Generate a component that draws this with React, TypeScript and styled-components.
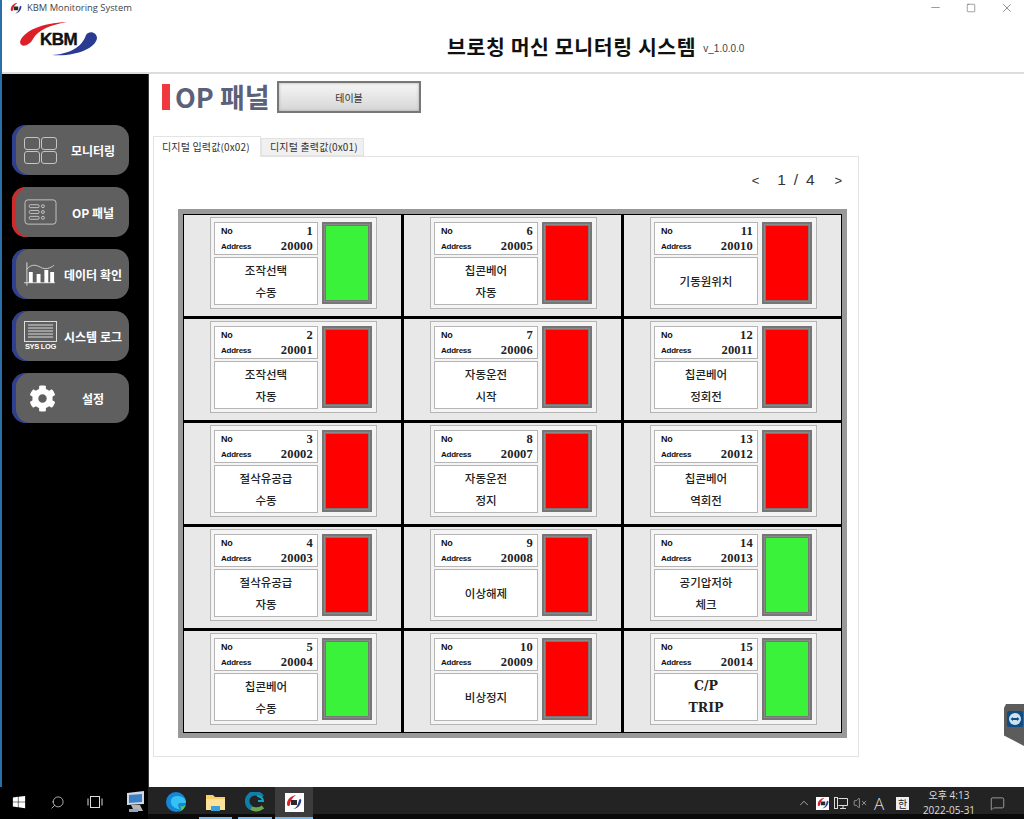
import React from "react";
import styled, { createGlobalStyle } from "styled-components";
import { FaCog, FaWindows } from "react-icons/fa";
import { ChevronUp, MessageSquare, Minus, Search, Square, VolumeX, X } from "lucide-react";

const KR = `"Noto Sans CJK KR", "Noto Sans", sans-serif`;

const signals = [
  { no: 1, address: 20000, lines: ["조작선택", "수동"], on: true },
  { no: 6, address: 20005, lines: ["칩콘베어", "자동"], on: false },
  { no: 11, address: 20010, lines: ["기동원위치"], on: false },
  { no: 2, address: 20001, lines: ["조작선택", "자동"], on: false },
  { no: 7, address: 20006, lines: ["자동운전", "시작"], on: false },
  { no: 12, address: 20011, lines: ["칩콘베어", "정회전"], on: false },
  { no: 3, address: 20002, lines: ["절삭유공급", "수동"], on: false },
  { no: 8, address: 20007, lines: ["자동운전", "정지"], on: false },
  { no: 13, address: 20012, lines: ["칩콘베어", "역회전"], on: false },
  { no: 4, address: 20003, lines: ["절삭유공급", "자동"], on: false },
  { no: 9, address: 20008, lines: ["이상해제"], on: false },
  { no: 14, address: 20013, lines: ["공기압저하", "체크"], on: true },
  { no: 5, address: 20004, lines: ["칩콘베어", "수동"], on: true },
  { no: 10, address: 20009, lines: ["비상정지"], on: false },
  { no: 15, address: 20014, lines: ["C/P", "TRIP"], on: true, latin: true },
];

function MonitorIcon() {
  return (
    <svg width="33" height="27" viewBox="0 0 33 27" fill="none" stroke="#c4c4c4" strokeWidth="1">
      <rect x="0.5" y="0.5" width="15" height="12" rx="2.5" />
      <rect x="17.5" y="0.5" width="15" height="12" rx="2.5" />
      <rect x="0.5" y="14.5" width="15" height="12" rx="2.5" />
      <rect x="17.5" y="14.5" width="15" height="12" rx="2.5" />
    </svg>
  );
}

function PanelIcon() {
  return (
    <svg width="34" height="26" viewBox="0 0 34 26" fill="none" stroke="#c4c4c4" strokeWidth="1">
      <rect x="1" y="0.5" width="32" height="25" rx="3" />
      <rect x="5.5" y="5.5" width="10" height="3" rx="1" />
      <rect x="5.5" y="11.5" width="10" height="3" rx="1" />
      <rect x="5.5" y="17.5" width="10" height="3" rx="1" />
      <circle cx="19.5" cy="7" r="1.5" />
      <circle cx="19.5" cy="13" r="1.5" />
      <circle cx="19.5" cy="19" r="1.5" />
    </svg>
  );
}

function ChartIcon() {
  return (
    <svg width="34" height="26" viewBox="0 0 34 26" fill="none">
      <path d="M3 1V25M0 22H32" stroke="#ddd" strokeWidth="1" />
      <path d="M3 8C8 2 13 4 17 6C22 9 27 7 31 4" stroke="#ccc" strokeWidth="1" />
      <path d="M5 11H9V22H5ZM13 13H17V22H13ZM21 9H25V22H21ZM27 11H31V22H27Z" fill="#fff" />
    </svg>
  );
}

function LogIcon() {
  return (
    <LogWrap>
      <svg width="33" height="21" viewBox="0 0 33 21" fill="none" stroke="#ddd" strokeWidth="1">
        <rect x="0.5" y="0.5" width="32" height="20" />
        <path d="M4 4H29M4 7H29M4 10H29M4 13H29M4 16H29" />
      </svg>
      <LogCaption>SYS LOG</LogCaption>
    </LogWrap>
  );
}

const navItems = [
  { label: "모니터링", icon: <MonitorIcon /> },
  { label: "OP 패널", icon: <PanelIcon />, active: true },
  { label: "데이터 확인", icon: <ChartIcon /> },
  { label: "시스템 로그", icon: <LogIcon /> },
  { label: "설정", icon: <FaCog size={27} color="#fff" style={{ marginLeft: 5 }} /> },
];

function KbmLogo() {
  return (
    <svg width="80" height="36" viewBox="0 0 80 36">
      <path d="M0 21C3 10 22 2 47 1C30 4 18 9 13 18C10 24 1 28 0 21Z" fill="#dd2027" />
      <path d="M32 34C48 33 62 27 66 14C69 9 77 11 77 17C76 27 56 36 32 34Z" fill="#2a3c92" />
      <LogoText x="20" y="24">KBM</LogoText>
    </svg>
  );
}

function AppGlyph({ size = 16 }: { size?: number }) {
  return (
    <svg width={size} height={size} viewBox="0 0 16 16">
      <path d="M1 10C1 5 5 2 10 1C6 4 4 7 4 11C3 13 1 12 1 10Z" fill="#d8242a" />
      <path d="M7 15C11 14 12 10 13 6C14 4 16 5 15 8C14 12 11 15 7 15Z" fill="#2a3c92" />
      <path d="M5 6H11V11H5Z" fill="#2b2b2b" />
    </svg>
  );
}

function EdgeIcon() {
  return (
    <svg width="20" height="20" viewBox="0 0 20 20">
      <circle cx="10" cy="10" r="10" fill="#1487d8" />
      <path d="M20 11C20 6 16 4 11 4C7 4 4 7 5 11C6 15 10 17 14 17C12 15 11 12 14 11Z" fill="#35c1f1" />
      <path d="M20 12C19 17 15 20 10 20C14 20 17 17 14 14C16 15 19 14 20 12Z" fill="#4fce5c" />
    </svg>
  );
}

function EdgeDevIcon() {
  return (
    <svg width="20" height="20" viewBox="0 0 20 20" fill="none">
      <path d="M17 5A8 8 0 1 0 6 16" stroke="#0f7fa8" strokeWidth="4.5" />
      <path d="M6 16C10 18 14 18 18 15" stroke="#6aa84f" strokeWidth="4" />
      <path d="M12 4C15 4 18 6 18 9H13" stroke="#12a5c4" strokeWidth="2" />
    </svg>
  );
}

function FolderIcon() {
  return (
    <svg width="19" height="18" viewBox="0 0 19 18">
      <path d="M0 2H7L9 4H19V17H0Z" fill="#f6cf68" />
      <path d="M0 6H19V17H0Z" fill="#fbe29a" />
      <path d="M5 13H14V18H5Z" fill="#3aa0dc" />
    </svg>
  );
}

function RemoteIcon() {
  return (
    <svg width="20" height="22" viewBox="0 0 20 22">
      <path d="M1 2L18 0V13L1 14Z" fill="#cfd8e6" />
      <path d="M3 4L16 3V11L3 12Z" fill="#3d7fc4" />
      <path d="M5 14H14L17 20H8Z" fill="#b5b5b5" />
      <path d="M3 18H12V21H3Z" fill="#8fa8c4" />
    </svg>
  );
}

function NetworkIcon() {
  return (
    <svg width="14" height="13" viewBox="0 0 14 13" fill="none" stroke="#ddd" strokeWidth="1">
      <path d="M4.5 1.5H13.5V8.5H4.5M9 8.5V11.5M6 11.5H12" />
      <rect x="0.5" y="0.5" width="3" height="11" />
    </svg>
  );
}

export default function App() {
  return (
    <>
      <GlobalStyle />
      <Page>
        <Win>
          <TitleBar>
            <TitleLeft>
              <AppGlyph size={12} />
              <span>KBM Monitoring System</span>
            </TitleLeft>
            <WinControls>
              <Minus size={13} strokeWidth={1} />
              <Square size={10} strokeWidth={1.2} />
              <X size={14} strokeWidth={1} />
            </WinControls>
          </TitleBar>
          <Header>
            <LogoSlot>
              <KbmLogo />
            </LogoSlot>
            <HeaderTitle>브로칭 머신 모니터링 시스템</HeaderTitle>
            <Version>v_1.0.0.0</Version>
          </Header>
          <Body>
            <Sidebar>
              {navItems.map((item) => (
                <NavButton key={item.label} $active={item.active}>
                  <NavIcon>{item.icon}</NavIcon>
                  <NavLabel>{item.label}</NavLabel>
                </NavButton>
              ))}
            </Sidebar>
            <Main>
              <TitleRow>
                <RedMark />
                <PageTitle>OP 패널</PageTitle>
                <TableButton>테이블</TableButton>
              </TitleRow>
              <Tabs>
                <Tab $active>디지털 입력값(0x02)</Tab>
                <Tab>디지털 출력값(0x01)</Tab>
              </Tabs>
              <Panel>
                <Pager>
                  <PagerArrow>&lt;</PagerArrow>
                  <PagerText>1 / 4</PagerText>
                  <PagerArrow>&gt;</PagerArrow>
                </Pager>
                <GridFrame>
                  <SignalGrid>
                    {signals.map((s) => (
                      <Cell key={s.no}>
                        <Card>
                          <CardText>
                            <InfoBox>
                              <InfoRow>
                                <InfoKey>No</InfoKey>
                                <InfoValue>{s.no}</InfoValue>
                              </InfoRow>
                              <InfoRow>
                                <InfoKey $small>Address</InfoKey>
                                <InfoValue>{s.address}</InfoValue>
                              </InfoRow>
                            </InfoBox>
                            <NameBox $latin={s.latin}>
                              {s.lines.map((line) => (
                                <div key={line}>{line}</div>
                              ))}
                            </NameBox>
                          </CardText>
                          <Lamp $on={s.on} />
                        </Card>
                      </Cell>
                    ))}
                  </SignalGrid>
                </GridFrame>
              </Panel>
            </Main>
          </Body>
          <RemoteTab>
            <RemoteBadge>
              <svg width="14" height="14" viewBox="0 0 14 14">
                <circle cx="7" cy="7" r="6" fill="#cfe0ee" />
                <path d="M2.5 7L5 5V6H9V5L11.5 7L9 9V8H5V9Z" fill="#0e4c86" />
              </svg>
            </RemoteBadge>
          </RemoteTab>
        </Win>
        <Taskbar>
          <TaskLeft>
            <TaskSlot $w={38}><FaWindows size={14} color="#fff" /></TaskSlot>
            <TaskSlot $w={38}><Search size={15} color="#ddd" strokeWidth={1.2} style={{ transform: "scaleX(-1)" }} /></TaskSlot>
            <TaskSlot $w={38}>
              <svg width="16" height="12" viewBox="0 0 16 12" fill="none" stroke="#ddd" strokeWidth="1">
                <rect x="3.5" y="0.5" width="9" height="11" />
                <path d="M1 2.5V9.5M15 2.5V9.5" />
              </svg>
            </TaskSlot>
            <TaskSlot $w={44}><RemoteIcon /></TaskSlot>
          </TaskLeft>
          <TaskApps>
            <TaskSlot $w={39}><EdgeIcon /></TaskSlot>
            <TaskSlot $w={33} $ml={4} $running><FolderIcon /></TaskSlot>
            <TaskSlot $w={34} $ml={6} $running><EdgeDevIcon /></TaskSlot>
            <TaskSlot $w={38} $ml={3} $running $current>
              <AppTile><AppGlyph /></AppTile>
            </TaskSlot>
          </TaskApps>
          <Tray>
            <ChevronUp size={14} color="#ddd" strokeWidth={1.2} />
            <AppTile $small><AppGlyph size={12} /></AppTile>
            <NetworkIcon />
            <VolumeX size={14} color="#ddd" strokeWidth={1} />
            <ImeA>A</ImeA>
            <ImeHan>한</ImeHan>
            <Clock>
              <div>오후 4:13</div>
              <div>2022-05-31</div>
            </Clock>
            <MessageSquare size={15} color="#ddd" strokeWidth={1} />
          </Tray>
        </Taskbar>
      </Page>
    </>
  );
}

const GlobalStyle = createGlobalStyle`
  html, body {
    margin: 0;
    padding: 0;
    background: #fff;
  }
  * {
    box-sizing: border-box;
  }
`;

const Page = styled.div`
  width: 1024px;
  height: 819px;
  overflow: hidden;
  display: flex;
  flex-direction: column;
  font-family: ${KR};
`;

const Win = styled.div`
  position: relative;
  height: 787px;
  display: flex;
  flex-direction: column;
  border-left: 2px solid #2b6fa8;
  background: #fff;
`;

const TitleBar = styled.div`
  height: 15px;
  display: flex;
  align-items: center;
  justify-content: space-between;
`;

const TitleLeft = styled.div`
  display: flex;
  align-items: center;
  gap: 5px;
  padding-left: 8px;
  font-family: "Open Sans", sans-serif;
  font-size: 9.4px;
  color: #444;
`;

const WinControls = styled.div`
  display: flex;
  align-items: center;
  gap: 24px;
  padding-right: 10px;
  color: #444;
`;

const Header = styled.div`
  height: 59px;
  position: relative;
  display: flex;
  align-items: center;
  border-bottom: 2px solid #dcdcdc;
`;

const LogoSlot = styled.div`
  width: 445px;
  padding: 0 0 5px 18px;
`;

const HeaderTitle = styled.div`
  font-size: 20.5px;
  letter-spacing: 0.6px;
  font-weight: 700;
  color: #111;
  padding-top: 5px;
`;

const Version = styled.div`
  font-family: "Liberation Sans", sans-serif;
  font-size: 10px;
  color: #444;
  margin: 10px 0 0 7px;
`;

const LogoText = styled.text`
  font-family: "Liberation Sans", sans-serif;
  font-size: 17px;
  font-weight: 700;
  fill: #111;
  stroke: #111;
  stroke-width: 0.4px;
  letter-spacing: -0.5px;
`;

const Body = styled.div`
  flex: 1;
  display: flex;
  min-height: 0;
`;

const Sidebar = styled.nav`
  width: 147px;
  background: #000;
  border-right: 1px solid #3a3a3a;
  padding: 51px 0 0 10px;
  display: flex;
  flex-direction: column;
  gap: 12px;
`;

const NavButton = styled.div<{ $active?: boolean }>`
  width: 117px;
  height: 50px;
  border-radius: 14px;
  background: #5f5f5f;
  box-shadow: inset 4px 0 0 ${(p) => (p.$active ? "#d12a2a" : "#2f3f92")};
  display: flex;
  align-items: center;
`;

const NavIcon = styled.div`
  width: 45px;
  padding-left: 12px;
  display: flex;
  align-items: center;
  flex-shrink: 0;
`;

const NavLabel = styled.div`
  flex: 1;
  text-align: center;
  color: #fff;
  font-size: 12px;
  font-weight: 700;
  white-space: nowrap;
`;

const LogWrap = styled.div`
  display: flex;
  flex-direction: column;
  align-items: center;
`;

const LogCaption = styled.div`
  font-family: "Liberation Sans", sans-serif;
  font-size: 7.5px;
  font-weight: 700;
  letter-spacing: -0.3px;
  color: #fff;
  line-height: 9px;
  white-space: nowrap;
`;

const Main = styled.main`
  flex: 1;
  padding: 7px 0 0 4px;
`;

const TitleRow = styled.div`
  height: 32px;
  display: flex;
  align-items: center;
`;

const RedMark = styled.div`
  width: 8px;
  height: 26px;
  margin-left: 9px;
  background: #f0393f;
`;

const PageTitle = styled.div`
  width: 107px;
  padding: 0 0 2px 5px;
  font-size: 27px;
  font-weight: 700;
  color: #5b6178;
  white-space: nowrap;
`;

const TableButton = styled.div`
  width: 144px;
  height: 32px;
  border: 2px solid #777;
  background: linear-gradient(#f6f6f6, #d6d6d6);
  box-shadow: inset 0 0 3px #aaa;
  display: flex;
  align-items: center;
  justify-content: center;
  font-size: 10px;
  color: #333;
`;

const Tabs = styled.div`
  margin-top: 22px;
  height: 21px;
  display: flex;
  align-items: flex-end;
`;

const Tab = styled.div<{ $active?: boolean }>`
  height: ${(p) => (p.$active ? 21 : 18)}px;
  width: ${(p) => (p.$active ? 108 : 103)}px;
  margin-bottom: ${(p) => (p.$active ? -1 : 0)}px;
  position: relative;
  padding: 0 0 2px 8px;
  display: flex;
  align-items: center;
  font-size: 10px;
  letter-spacing: 0.15px;
  color: #333;
  white-space: nowrap;
  background: ${(p) => (p.$active ? "#fff" : "#f0f0f0")};
  border: 1px solid #e3e3e3;
  border-bottom: ${(p) => (p.$active ? "none" : "1px solid #e3e3e3")};
`;

const Panel = styled.section`
  width: 706px;
  height: 601px;
  border: 1px solid #e3e3e3;
  padding: 13px 0 0 24px;
`;

const Pager = styled.div`
  height: 20px;
  width: 669px;
  padding-right: 5px;
  display: flex;
  justify-content: flex-end;
  align-items: center;
  gap: 18px;
  font-family: "Liberation Sans", sans-serif;
  color: #333;
`;

const PagerArrow = styled.span`
  font-size: 13px;
`;

const PagerText = styled.span`
  font-size: 15.5px;
  letter-spacing: 1.8px;
`;

const GridFrame = styled.div`
  margin-top: 19px;
  width: 669px;
  height: 529px;
  background: #000;
  border: 5px solid #999;
  padding: 1px;
`;

const SignalGrid = styled.div`
  height: 100%;
  display: grid;
  grid-template-columns: repeat(3, 1fr);
  grid-template-rows: repeat(5, 1fr);
  gap: 3px;
`;

const Cell = styled.div`
  background: #e8e8e8;
  display: flex;
  align-items: flex-start;
  padding: 2px 0 0 26px;
`;

const Card = styled.div`
  width: 167px;
  height: 92px;
  background: #f4f4f4;
  border: 1px solid #b5b5b5;
  padding: 4px 4px 3px 3px;
  display: flex;
  gap: 4px;
`;

const CardText = styled.div`
  width: 104px;
  display: flex;
  flex-direction: column;
  gap: 2px;
`;

const InfoBox = styled.div`
  height: 33px;
  background: #fff;
  border: 1px solid #b5b5b5;
  padding: 0 4px 0 6px;
  display: flex;
  flex-direction: column;
  justify-content: center;
`;

const InfoRow = styled.div`
  height: 15px;
  display: flex;
  align-items: center;
  justify-content: space-between;
`;

const InfoKey = styled.span<{ $small?: boolean }>`
  font-family: "Liberation Sans", sans-serif;
  font-size: ${(p) => (p.$small ? 8 : 9)}px;
  font-weight: 700;
  letter-spacing: -0.25px;
  color: #111;
`;

const InfoValue = styled.span`
  font-family: "Liberation Serif", serif;
  font-size: 12.5px;
  font-weight: 700;
  letter-spacing: 0.2px;
  color: #222;
`;

const NameBox = styled.div<{ $latin?: boolean }>`
  flex: 1;
  background: #fff;
  border: 1px solid #b5b5b5;
  display: flex;
  flex-direction: column;
  align-items: center;
  justify-content: center;
  gap: 5.5px;
  font-family: ${(p) => (p.$latin ? `"DejaVu Serif", serif` : KR)};
  font-size: ${(p) => (p.$latin ? 12.5 : 11.5)}px;
  font-weight: ${(p) => (p.$latin ? 700 : 500)};
  line-height: 16px;
  color: #222;
`;

const Lamp = styled.div<{ $on?: boolean }>`
  width: 50px;
  height: 82px;
  border: 4px solid #767676;
  outline: 1px solid #8a8a8a;
  outline-offset: -3px;
  background: ${(p) => (p.$on ? "#3af23a" : "#ff0000")};
`;

const RemoteTab = styled.div`
  position: absolute;
  right: 0;
  top: 704px;
  width: 20px;
  height: 42px;
  background: #5c5c5c;
  clip-path: polygon(2px 0, 100% 0, 100% 100%, 0 75%, 0 4px);
  padding: 7px 0 0 3px;
`;

const RemoteBadge = styled.div`
  width: 16px;
  height: 16px;
  background: #0e4c86;
  border-radius: 2px;
  display: flex;
  align-items: center;
  justify-content: center;
`;

const Taskbar = styled.footer`
  height: 32px;
  background: linear-gradient(#232323 84%, #0a0a0a 84%);
  display: flex;
  align-items: center;
`;

const TaskLeft = styled.div`
  width: 148px;
  flex-shrink: 0;
  height: 100%;
  background: #000;
  display: flex;
`;

const TaskApps = styled.div`
  display: flex;
  height: 100%;
  margin-left: 8px;
`;

const TaskSlot = styled.div<{ $w: number; $ml?: number; $running?: boolean; $current?: boolean }>`
  width: ${(p) => p.$w}px;
  flex-shrink: 0;
  margin-left: ${(p) => p.$ml ?? 0}px;
  height: 100%;
  display: flex;
  align-items: center;
  justify-content: center;
  background: ${(p) => (p.$current ? "#3c3c3c" : "transparent")};
  border-bottom: 2px solid ${(p) => (p.$running ? "#76b9ed" : "transparent")};
`;

const AppTile = styled.div<{ $small?: boolean }>`
  width: ${(p) => (p.$small ? 13 : 19)}px;
  height: ${(p) => (p.$small ? 13 : 19)}px;
  background: #fff;
  display: flex;
  align-items: center;
  justify-content: center;
  overflow: hidden;
`;

const Tray = styled.div`
  margin-left: auto;
  display: flex;
  align-items: center;
  gap: 5px;
  padding-right: 19px;
  color: #ddd;
`;

const ImeA = styled.div`
  width: 14px;
  font-family: "Open Sans", sans-serif;
  font-size: 17px;
  font-weight: 300;
  text-align: center;
`;

const ImeHan = styled.div`
  margin-left: 5px;
  width: 13px;
  height: 13px;
  background: #eee;
  color: #222;
  font-size: 10px;
  line-height: 13px;
  text-align: center;
`;

const Clock = styled.div`
  width: 68px;
  margin: 0 2px 0 1px;
  font-size: 10px;
  line-height: 15px;
  text-align: center;
  color: #ddd;
  font-family: "Open Sans", ${KR};
  white-space: nowrap;
`;
